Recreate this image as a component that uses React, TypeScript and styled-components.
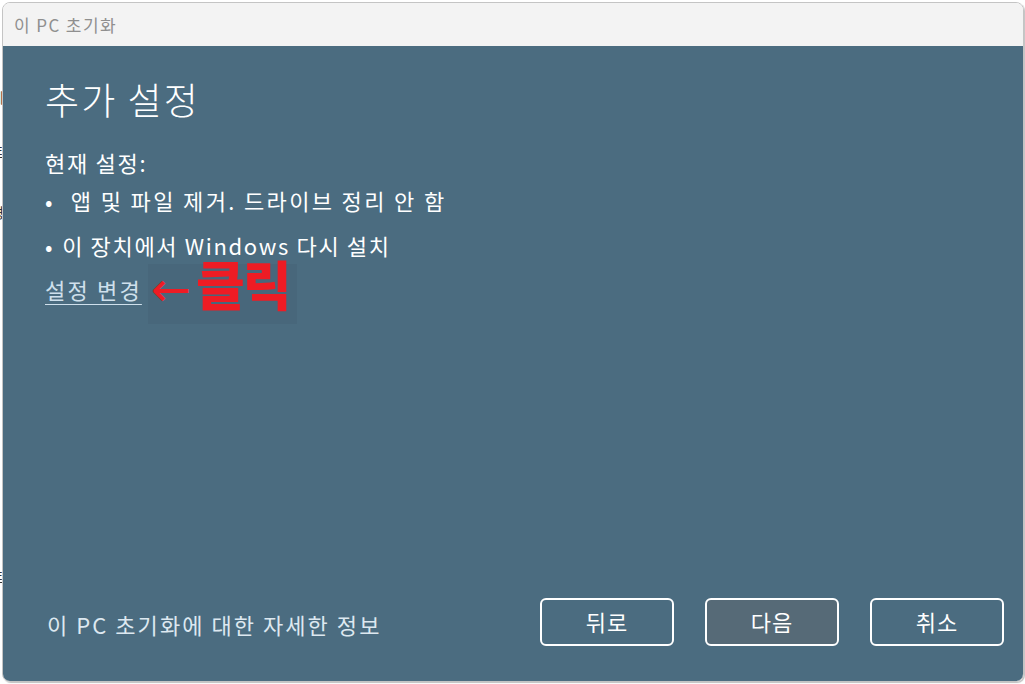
import React from "react";
import styled, { createGlobalStyle } from "styled-components";

const Global = createGlobalStyle`
  html, body { margin: 0; padding: 0; background: #ffffff; }
  body { font-family: "Noto Sans CJK KR", "Noto Sans", sans-serif; }
  * { box-sizing: border-box; }
`;

const Page = styled.div`
  width: 1025px;
  height: 684px;
  padding: 2px 1px 2px 2px;
  position: relative;
`;

const Backdrop = styled.div`
  position: absolute;
  left: 0;
  top: 0;
  width: 4px;
  height: 684px;
  overflow: hidden;
  font-size: 14px;
  color: #333;
  line-height: 1;
`;

const BackChar = styled.span<{ $top: number }>`
  position: absolute;
  left: -9px;
  top: ${(p) => p.$top}px;
`;

const Window = styled.div`
  width: 1022px;
  height: 680px;
  border: 1px solid #c4c4c4;
  border-radius: 8px;
  overflow: hidden;
  display: flex;
  flex-direction: column;
  box-shadow: 1px 1px 1px rgba(0, 0, 0, 0.25);
  position: relative;
`;

const TitleBar = styled.div`
  height: 43px;
  flex: none;
  background: #f3f3f3;
  display: flex;
  align-items: center;
  padding-left: 11px;
  padding-bottom: 1px;
  font-size: 17px;
  letter-spacing: 1.4px;
  color: #8f8f8f;
`;

const Body = styled.div`
  flex: 1;
  background: #4b6c80;
  display: flex;
  flex-direction: column;
  padding: 0 19px 35px 42px;
  color: #ffffff;
`;

const Heading = styled.h1`
  margin: 29px 0 0 0;
  font-size: 37px;
  font-weight: 300;
  line-height: 48px;
  letter-spacing: 2.1px;
`;

const Label = styled.div`
  margin-top: 24px;
  font-size: 22px;
  line-height: 30px;
  letter-spacing: 1.7px;
`;

const BulletList = styled.ul`
  list-style: none;
  margin: 8px 0 0 0;
  padding: 0;
  display: flex;
  flex-direction: column;
  gap: 15px;
`;

const Bullet = styled.li<{ $gap: number; $spacing: number }>`
  font-size: 22px;
  line-height: 30px;
  letter-spacing: ${(p) => p.$spacing}px;
  display: flex;
  &::before {
    content: "•";
    margin-right: ${(p) => p.$gap}px;
  }
`;

const LinkRow = styled.div`
  display: flex;
  align-items: center;
  margin-top: -6px;
`;

const ChangeLink = styled.a`
  font-size: 22px;
  line-height: 30px;
  color: #cfe0ec;
  text-decoration: underline;
  text-underline-offset: 5px;
  text-decoration-thickness: 1px;
  letter-spacing: 2.2px;
  cursor: pointer;
`;

const Annotation = styled.div`
  width: 149px;
  height: 60px;
  margin-left: 6px;
  margin-top: 10px;
  background: #48677b;
  display: flex;
  align-items: flex-start;
  color: #ee1c24;
  font-weight: 700;
`;

const Arrow = styled.span`
  font-size: 48px;
  line-height: 1;
  margin-left: 3px;
  margin-top: 1px;
  font-family: "DejaVu Sans", sans-serif;
  font-weight: 400;
`;

const ClickText = styled.span`
  font-size: 53px;
  line-height: 0.8;
  margin-top: -2px;
  margin-left: 5px;
  font-weight: 900;
  letter-spacing: -2px;
`;

const Spacer = styled.div`
  flex: 1;
`;

const Footer = styled.div`
  display: flex;
  align-items: center;
`;

const MoreInfo = styled.a`
  font-size: 22px;
  color: #dde8f0;
  letter-spacing: 2.05px;
  margin-left: 2px;
  margin-top: 4px;
`;

const Buttons = styled.div`
  margin-left: auto;
  display: flex;
  gap: 31px;
`;

const Button = styled.button<{ $primary?: boolean }>`
  width: 134px;
  height: 48px;
  border: 2px solid #ffffff;
  border-radius: 6px;
  background: ${(p) => (p.$primary ? "#566a77" : "transparent")};
  color: #ffffff;
  font-family: "Noto Sans CJK KR", sans-serif;
  font-size: 22px;
  letter-spacing: 1px;
  padding: 0 0 2px 0;
  cursor: pointer;
`;

export default function App() {
  return (
    <>
      <Global />
      <Page>
        <Backdrop>
          <BackChar $top={90}>세</BackChar>
          <BackChar $top={145}>트</BackChar>
          <BackChar $top={205}>경</BackChar>
          <BackChar $top={570}>트</BackChar>
          <BackChar $top={630}>V</BackChar>
        </Backdrop>
        <Window>
          <TitleBar>이 PC 초기화</TitleBar>
          <Body>
            <Heading>추가 설정</Heading>
            <Label>현재 설정:</Label>
            <BulletList>
              <Bullet $gap={16} $spacing={2.35}>앱 및 파일 제거. 드라이브 정리 안 함</Bullet>
              <Bullet $gap={8} $spacing={1.65}>이 장치에서 Windows 다시 설치</Bullet>
            </BulletList>
            <LinkRow>
              <ChangeLink>설정 변경</ChangeLink>
              <Annotation>
                <Arrow>←</Arrow>
                <ClickText>클릭</ClickText>
              </Annotation>
            </LinkRow>
            <Spacer />
            <Footer>
              <MoreInfo>이 PC 초기화에 대한 자세한 정보</MoreInfo>
              <Buttons>
                <Button>뒤로</Button>
                <Button $primary>다음</Button>
                <Button>취소</Button>
              </Buttons>
            </Footer>
          </Body>
        </Window>
      </Page>
    </>
  );
}
